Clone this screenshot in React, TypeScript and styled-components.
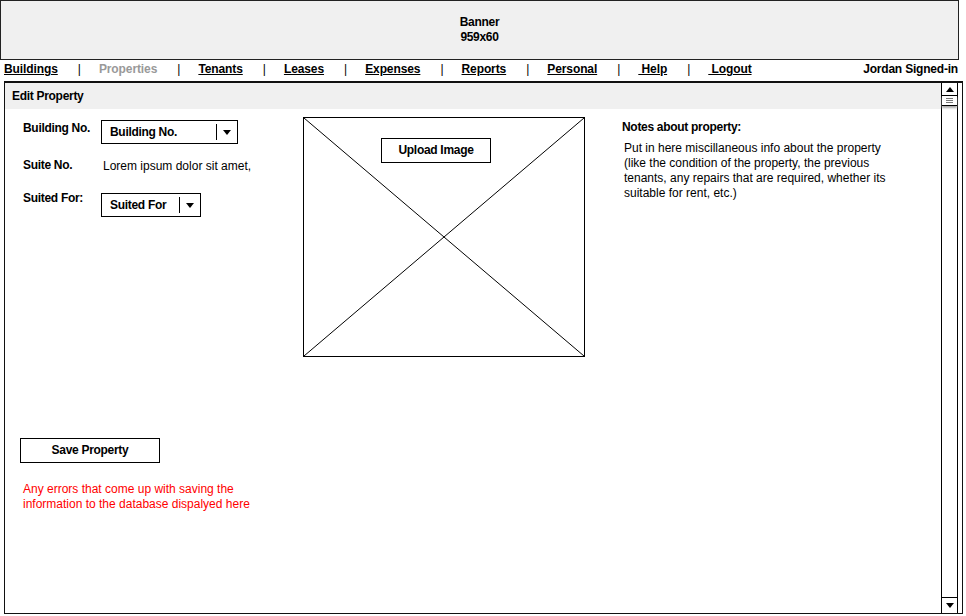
import styled, { createGlobalStyle } from 'styled-components'

const Global = createGlobalStyle`
  body {
    margin: 0;
    background: #fff;
    font-family: "Liberation Sans", Arial, sans-serif;
    font-size: 12px;
    color: #000;
  }
`;

const Page = styled.div`
  width: 966px;
  height: 616px;
  overflow: hidden;
`;

const Banner = styled.header`
  width: 959px;
  height: 60px;
  box-sizing: border-box;
  border: 1px solid #222;
  background: #f0f0f0;
  display: flex;
  flex-direction: column;
  align-items: center;
  justify-content: center;
  padding-bottom: 1px;
  font-weight: bold;
  letter-spacing: -0.3px;
  line-height: 15px;
`;

const Nav = styled.nav`
  display: flex;
  align-items: flex-start;
  height: 21px;
  box-sizing: border-box;
  padding: 2px 8px 0 4px;
  line-height: 14px;
`;

const NavLink = styled.span<{ $current?: boolean }>`
  font-weight: bold;
  letter-spacing: -0.1px;
  text-decoration: ${p => (p.$current ? 'none' : 'underline')};
  color: ${p => (p.$current ? '#999' : '#000')};
  white-space: pre;
`;

const Sep = styled.span`
  padding: 0 18px 0 20px;
`;

const SignedIn = styled.span`
  margin-left: auto;
  font-weight: bold;
  letter-spacing: -0.2px;
`;

const Panel = styled.section`
  margin-left: 4px;
  width: 959px;
  height: 533px;
  box-sizing: border-box;
  border: 1px solid #111;
  border-top-width: 2px;
  display: flex;
  padding-right: 4px;
`;

const Main = styled.div`
  flex: 1;
  display: flex;
  flex-direction: column;
`;

const Header = styled.div`
  height: 26px;
  background: #f0f0f0;
  display: flex;
  align-items: center;
  padding: 0 0 1px 7px;
  box-sizing: border-box;
  font-weight: bold;
  letter-spacing: -0.3px;
`;

const Body = styled.div`
  display: flex;
  padding: 8px 0 0 15px;
`;

const FormCol = styled.div`
  width: 283px;
  display: flex;
  flex-direction: column;
`;

const Row = styled.div<{ $top: number }>`
  display: flex;
  align-items: flex-start;
  margin-top: ${p => p.$top}px;
  padding-left: 3px;
`;

const Label = styled.span<{ $shift?: number }>`
  width: 78px;
  font-weight: bold;
  letter-spacing: -0.3px;
  line-height: 14px;
  margin-top: ${p => p.$shift ?? 0}px;
`;

const Value = styled.span`
  line-height: 14px;
  margin-top: 1px;
  padding-left: 2px;
`;

const Select = styled.div<{ $width: number; $shift?: number }>`
  width: ${p => p.$width}px;
  height: 24px;
  box-sizing: border-box;
  border: 1px solid #000;
  display: flex;
  align-items: center;
  margin-top: ${p => p.$shift ?? 0}px;
  font-weight: bold;
  letter-spacing: -0.3px;
`;

const SelectText = styled.span`
  flex: 1;
  padding-left: 8px;
`;

const Caret = styled.span`
  width: 20px;
  height: 16px;
  border-left: 1px solid #000;
  display: flex;
  align-items: center;
  justify-content: center;

  &::after {
    content: '';
    border-left: 4px solid transparent;
    border-right: 4px solid transparent;
    border-top: 5px solid #000;
  }
`;

const Button = styled.div<{ $width: number }>`
  width: ${p => p.$width}px;
  height: 25px;
  box-sizing: border-box;
  border: 1px solid #000;
  background: #fff;
  display: flex;
  align-items: center;
  justify-content: center;
  padding-bottom: 1px;
  font-weight: bold;
  letter-spacing: -0.3px;
`;

const SaveWrap = styled.div`
  margin-top: 221px;
`;

const ErrorText = styled.p`
  margin: 19px 0 0 3px;
  color: #ff0000;
  line-height: 15px;
`;

const ImageBox = styled.div`
  position: relative;
  width: 282px;
  height: 240px;
  box-sizing: border-box;
  border: 1px solid #000;

  svg {
    display: block;
  }
`;

const UploadButton = styled(Button)`
  position: absolute;
  left: 77px;
  top: 20px;
`;

const Notes = styled.div`
  margin-left: 37px;
  padding-top: 3px;
`;

const NotesTitle = styled.div`
  font-weight: bold;
  letter-spacing: -0.3px;
  line-height: 14px;
`;

const NotesText = styled.p`
  margin: 7px 0 0 2px;
  line-height: 15px;
`;

const ScrollBar = styled.div`
  width: 17px;
  box-sizing: border-box;
  border-left: 1px solid #000;
  border-right: 1px solid #000;
  display: flex;
  flex-direction: column;
`;

const ArrowUp = styled.div`
  height: 12px;
  display: flex;
  align-items: center;
  justify-content: center;

  &::after {
    content: '';
    border-left: 4px solid transparent;
    border-right: 4px solid transparent;
    border-bottom: 5px solid #000;
  }
`;

const Thumb = styled.div`
  height: 9px;
  border-top: 1px solid #000;
  border-bottom: 1px solid #000;
  box-shadow: 0 2px 2px #aaa;
  display: flex;
  flex-direction: column;
  align-items: center;
  justify-content: center;
  gap: 1px;

  i {
    display: block;
    width: 7px;
    height: 1px;
    background: #777;
  }
`;

const Track = styled.div`
  flex: 1;
`;

const ArrowDown = styled.div`
  height: 15px;
  border-top: 1px solid #000;
  display: flex;
  align-items: center;
  justify-content: center;

  &::after {
    content: '';
    border-left: 4px solid transparent;
    border-right: 4px solid transparent;
    border-top: 5px solid #000;
  }
`;

const links = ['Buildings', 'Properties', 'Tenants', 'Leases', 'Expenses', 'Reports', 'Personal', ' Help', ' Logout'];

export default function App() {
  return (
    <Page>
      <Global />
      <Banner>
        <span>Banner</span>
        <span>959x60</span>
      </Banner>
      <Nav>
        {links.map((l, i) => (
          <span key={l}>
            <NavLink $current={l === 'Properties'}>{l}</NavLink>
            {i < links.length - 1 && <Sep>|</Sep>}
          </span>
        ))}
        <SignedIn>Jordan Signed-in</SignedIn>
      </Nav>
      <Panel>
        <Main>
          <Header>Edit Property</Header>
          <Body>
            <FormCol>
              <Row $top={3}>
                <Label $shift={1}>Building No.</Label>
                <Select $width={137}>
                  <SelectText>Building No.</SelectText>
                  <Caret />
                </Select>
              </Row>
              <Row $top={14}>
                <Label>Suite No.</Label>
                <Value>Lorem ipsum dolor sit amet,</Value>
              </Row>
              <Row $top={18}>
                <Label>Suited For:</Label>
                <Select $width={100} $shift={2}>
                  <SelectText>Suited For</SelectText>
                  <Caret />
                </Select>
              </Row>
              <SaveWrap>
                <Button $width={140}>Save Property</Button>
              </SaveWrap>
              <ErrorText>
                Any errors that come up with saving the
                <br />
                information to the database dispalyed here
              </ErrorText>
            </FormCol>
            <ImageBox>
              <svg width="280" height="238" viewBox="0 0 280 238">
                <line x1="0" y1="0" x2="280" y2="238" stroke="#000" strokeWidth="1" />
                <line x1="280" y1="0" x2="0" y2="238" stroke="#000" strokeWidth="1" />
              </svg>
              <UploadButton $width={110}>Upload Image</UploadButton>
            </ImageBox>
            <Notes>
              <NotesTitle>Notes about property:</NotesTitle>
              <NotesText>
                Put in here miscillaneous info about the property
                <br />
                (like the condition of the property, the previous
                <br />
                tenants, any repairs that are required, whether its
                <br />
                suitable for rent, etc.)
              </NotesText>
            </Notes>
          </Body>
        </Main>
        <ScrollBar>
          <ArrowUp />
          <Thumb>
            <i />
            <i />
            <i />
          </Thumb>
          <Track />
          <ArrowDown />
        </ScrollBar>
      </Panel>
    </Page>
  )
}
